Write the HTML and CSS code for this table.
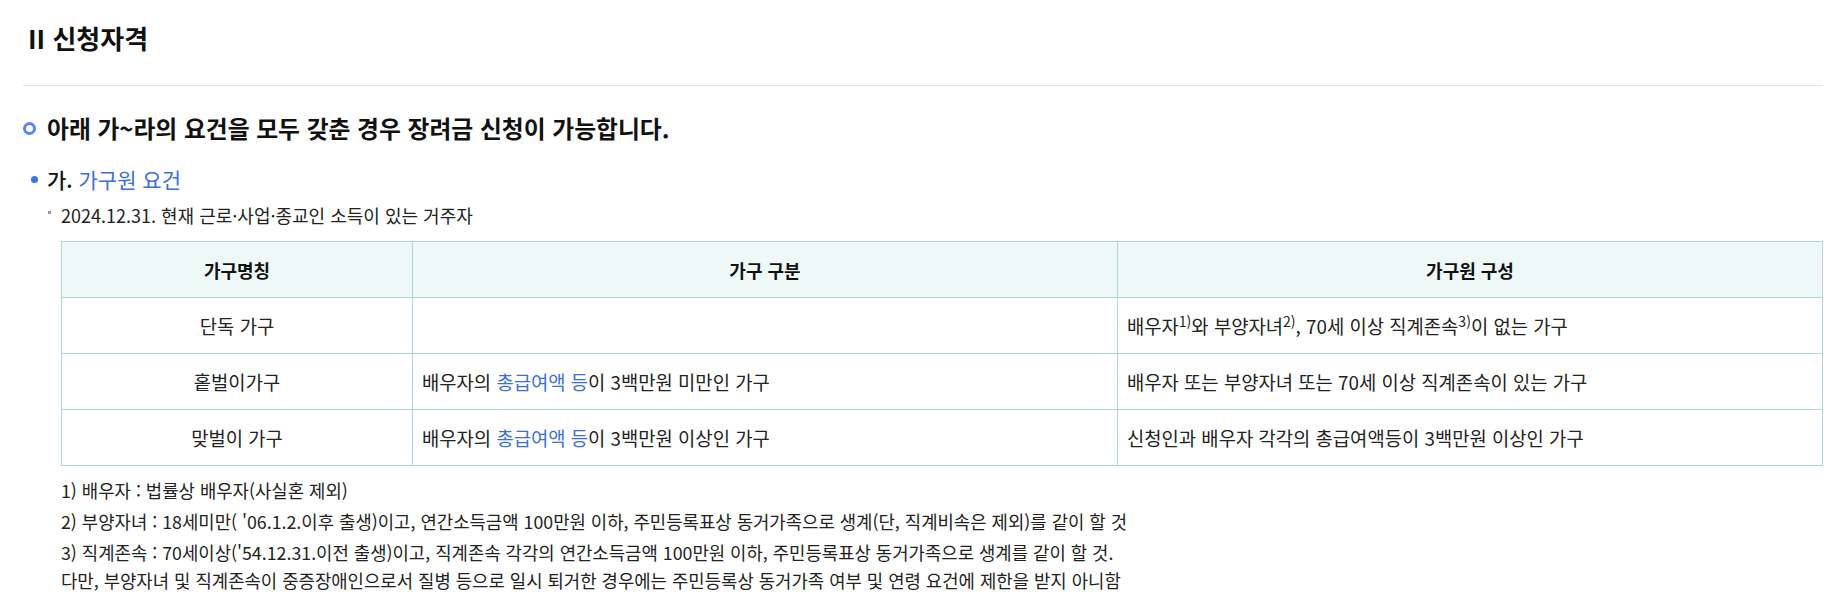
FILE: index.html
```html
<!DOCTYPE html>
<html lang="ko">
<head>
<meta charset="utf-8">
<title>신청자격</title>
<link rel="stylesheet" href="styles.css">
</head>
<body>
<div class="page">
  <h2 class="title">II 신청자격</h2>
  <hr class="divider">
  <h3 class="heading"><span class="ring"></span><span>아래 가~라의 요건을 모두 갖춘 경우 장려금 신청이 가능합니다.</span></h3>
  <div class="sub"><span class="dot"></span><span><span class="sub-num">가.</span> <span class="blue">가구원 요건</span></span></div>
  <p class="item"><span class="sq"></span><span>2024.12.31. 현재 근로·사업·종교인 소득이 있는 거주자</span></p>
  <table class="tbl">
    <colgroup>
      <col class="c1">
      <col class="c2">
      <col class="c3">
    </colgroup>
    <thead>
      <tr><th>가구명칭</th><th>가구 구분</th><th>가구원 구성</th></tr>
    </thead>
    <tbody>
      <tr>
        <td class="center">단독 가구</td>
        <td></td>
        <td>배우자<sup>1)</sup>와 부양자녀<sup>2)</sup>, 70세 이상 직계존속<sup>3)</sup>이 없는 가구</td>
      </tr>
      <tr>
        <td class="center">홑벌이가구</td>
        <td>배우자의 <span class="blue">총급여액 등</span>이 3백만원 미만인 가구</td>
        <td>배우자 또는 부양자녀 또는 70세 이상 직계존속이 있는 가구</td>
      </tr>
      <tr>
        <td class="center">맞벌이 가구</td>
        <td>배우자의 <span class="blue">총급여액 등</span>이 3백만원 이상인 가구</td>
        <td>신청인과 배우자 각각의 총급여액등이 3백만원 이상인 가구</td>
      </tr>
    </tbody>
  </table>
  <div class="notes">
    <p>1) 배우자 : 법률상 배우자(사실혼 제외)</p>
    <p>2) 부양자녀 : 18세미만( '06.1.2.이후 출생)이고, 연간소득금액 100만원 이하, 주민등록표상 동거가족으로 생계(단, 직계비속은 제외)를 같이 할 것</p>
    <p>3) 직계존속 : 70세이상('54.12.31.이전 출생)이고, 직계존속 각각의 연간소득금액 100만원 이하, 주민등록표상 동거가족으로 생계를 같이 할 것.<br>다만, 부양자녀 및 직계존속이 중증장애인으로서 질병 등으로 일시 퇴거한 경우에는 주민등록상 동거가족 여부 및 연령 요건에 제한을 받지 아니함</p>
  </div>
</div>
</body>
</html>
```

FILE: styles.css
```css
* { box-sizing: border-box; }
html, body { margin: 0; padding: 0; background: #fff; }
body {
  font-family: "Noto Sans CJK KR", "Noto Sans", sans-serif;
  color: #333;
}
.page {
  padding: 20px 10px 0 23px;
}
.title {
  margin: 0;
  padding-left: 5px;
  font-size: 26px;
  line-height: 36px;
  font-weight: 700;
  color: #111;
}
.divider {
  margin: 29px 0 0 0;
  border: 0;
  border-top: 1px solid #e3e3e3;
  height: 0;
}
.heading {
  margin: 25px 0 0 0;
  display: flex;
  align-items: center;
  font-size: 23.8px;
  line-height: 34px;
  font-weight: 700;
  color: #111;
}
.ring {
  width: 13px;
  height: 13px;
  border: 3px solid #5688ec;
  border-radius: 50%;
  margin-right: 11px;
  flex: none;
}
.sub {
  margin: 19px 0 0 0;
  display: flex;
  align-items: center;
  font-size: 21px;
  line-height: 30px;
  color: #222;
}
.dot {
  width: 7px;
  height: 7px;
  border-radius: 50%;
  background: #3b73e0;
  margin: 0 9px 0 8px;
  flex: none;
}
.sub-num { font-weight: 500; color: #111; }
.blue { color: #3a6fdc; }
.item {
  margin: 8px 0 0 0;
  display: flex;
  align-items: center;
  font-size: 18px;
  line-height: 26px;
  color: #222;
}
.sq {
  width: 3px;
  height: 3px;
  background: #9a9a9a;
  margin: 0 10px 0 25px;
  flex: none;
  position: relative;
  top: -3px;
}
.tbl {
  margin: 13px 0 0 38px;
  width: 1761px;
  border-collapse: collapse;
  table-layout: fixed;
  font-size: 18.8px;
  color: #222;
}
.c1 { width: 351px; }
.c2 { width: 705px; }
.c3 { width: 705px; }
.tbl th, .tbl td {
  border: 1px solid #b3d5da;
  height: 56px;
  padding: 0 9px;
  vertical-align: middle;
  line-height: 24px;
}
.tbl th {
  background: #eef8f7;
  font-weight: 700;
  font-size: 18px;
  text-align: center;
  color: #111;
}
.tbl td { text-align: left; }
.tbl td.center { text-align: center; }
.tbl sup {
  font-size: 14px;
  line-height: 0;
  vertical-align: 7px;
}
.notes {
  margin: 10px 0 0 38px;
  font-size: 17.8px;
  line-height: 28px;
  color: #222;
}
.notes p {
  margin: 0 0 3px 0;
}
```
